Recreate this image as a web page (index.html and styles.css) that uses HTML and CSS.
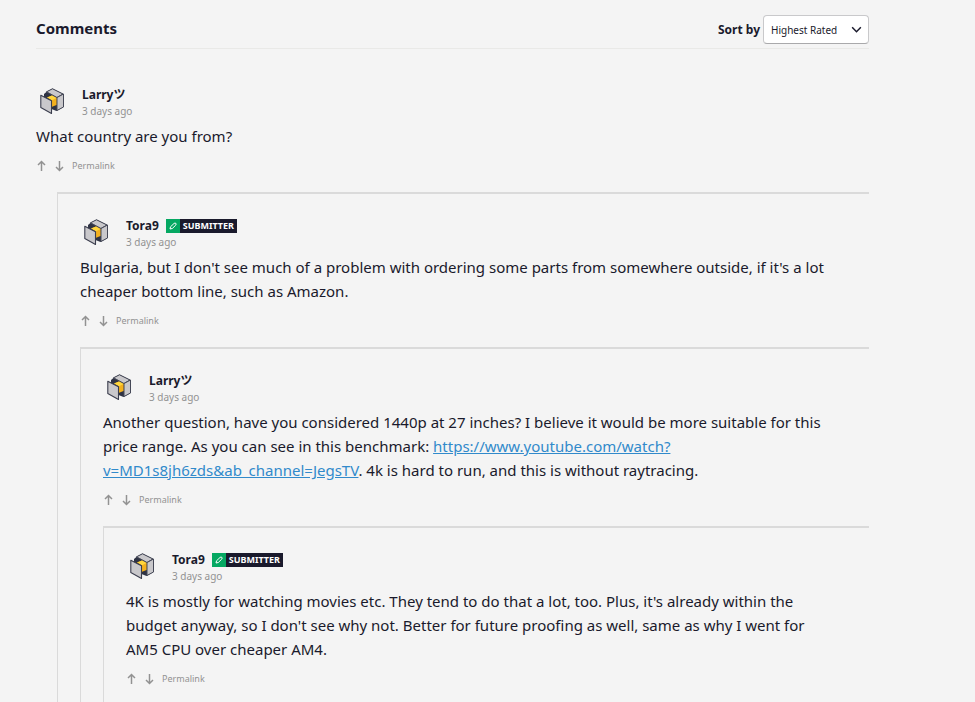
FILE: index.html
```html
<!DOCTYPE html>
<html lang="en">
<head>
<meta charset="utf-8">
<meta name="viewport" content="width=device-width, initial-scale=1">
<title>Comments</title>
<link rel="stylesheet" href="styles.css">
</head>
<body>
<svg class="sprite" aria-hidden="true">
  <symbol id="cube" viewBox="0 0 32 32">
    <path d="M16.500 3.500 27.500 9V22L20.500 26 15.500 24 8 18V9L11 6.500Z" fill="#2f3344"/>
    <path d="M10.500 6.800 16.500 3.800 27 9 21 12.500Z" fill="#c9c8cb" stroke="#454857" stroke-width="1" stroke-linejoin="round"/>
    <path d="M21 12.500 27.500 9V22L21 25.500Z" fill="#c9c8cb" stroke="#454857" stroke-width="1" stroke-linejoin="round"/>
    <path d="M11 12.500 16 10.500 20.500 13V20L15.500 22V15Z" fill="#f3b01e"/>
    <path d="M11 12.500 16 10.500 20.500 13 16 15.200Z" fill="#ffd63d"/>
    <path d="M4.800 10.200 15.500 15.800V28.500L4.800 22.500Z" fill="#c9c8cb" stroke="#3b3e4e" stroke-width="1.100" stroke-linejoin="round"/>
  </symbol>
  <symbol id="up" viewBox="0 0 12 12">
    <path d="M5.500 11V1.500M2 5 5.500 1.500 9 5" fill="none" stroke="currentColor" stroke-width="1.500"/>
  </symbol>
  <symbol id="down" viewBox="0 0 12 12">
    <path d="M5.500 1V10.500M2 7 5.500 10.500 9 7" fill="none" stroke="currentColor" stroke-width="1.500"/>
  </symbol>
  <symbol id="pencil" viewBox="0 0 14 14">
    <path d="M4 10 4.500 7.800 8 4.500Q9 3.700 9.800 4.300T9.700 6.200L6.300 9.500Z" fill="none" stroke="currentColor" stroke-width="1"/>
  </symbol>
</svg>
<main class="comments">
  <header class="comments-header">
    <h2 class="title">Comments</h2>
    <div class="sort">
      <label for="sort">Sort by</label>
      <div class="select">
        <select id="sort"><option>Highest Rated</option></select>
        <svg class="chevron" viewBox="0 0 12 12" aria-hidden="true"><path d="M2 4 6 8 10 4" fill="none" stroke="currentColor" stroke-width="1.400"/></svg>
      </div>
    </div>
  </header>
  <article class="comment">
    <header class="author">
      <svg class="avatar" aria-hidden="true"><use href="#cube"/></svg>
      <div>
        <div class="name">Larryツ</div>
        <div class="date">3 days ago</div>
      </div>
    </header>
    <p class="text">What country are you from?</p>
    <div class="actions">
      <button class="vote" aria-label="Upvote"><svg><use href="#up"/></svg></button>
      <button class="vote" aria-label="Downvote"><svg><use href="#down"/></svg></button>
      <a class="permalink" href="#">Permalink</a>
    </div>
    <div class="replies replies-first">
      <article class="comment">
        <header class="author">
          <svg class="avatar" aria-hidden="true"><use href="#cube"/></svg>
          <div>
            <div class="name">Tora9 <span class="badge"><svg class="badge-icon"><use href="#pencil"/></svg><span class="badge-label">SUBMITTER</span></span></div>
            <div class="date">3 days ago</div>
          </div>
        </header>
        <p class="text">Bulgaria, but I don't see much of a problem with ordering some parts from somewhere outside, if it's a lot cheaper bottom line, such as Amazon.</p>
        <div class="actions">
          <button class="vote" aria-label="Upvote"><svg><use href="#up"/></svg></button>
          <button class="vote" aria-label="Downvote"><svg><use href="#down"/></svg></button>
          <a class="permalink" href="#">Permalink</a>
        </div>
        <div class="replies">
          <article class="comment">
            <header class="author">
              <svg class="avatar" aria-hidden="true"><use href="#cube"/></svg>
              <div>
                <div class="name">Larryツ</div>
                <div class="date">3 days ago</div>
              </div>
            </header>
            <p class="text">Another question, have you considered 1440p at 27 inches? I believe it would be more suitable for this price range. As you can see in this benchmark: <a href="https://www.youtube.com/watch?v=MD1s8jh6zds&amp;ab_channel=JegsTV">https://www.youtube.com/watch?v=MD1s8jh6zds&amp;ab_channel=JegsTV</a>. 4k is hard to run, and this is without raytracing.</p>
            <div class="actions">
              <button class="vote" aria-label="Upvote"><svg><use href="#up"/></svg></button>
              <button class="vote" aria-label="Downvote"><svg><use href="#down"/></svg></button>
              <a class="permalink" href="#">Permalink</a>
            </div>
            <div class="replies">
              <article class="comment comment-last">
                <header class="author">
                  <svg class="avatar" aria-hidden="true"><use href="#cube"/></svg>
                  <div>
                    <div class="name">Tora9 <span class="badge"><svg class="badge-icon"><use href="#pencil"/></svg><span class="badge-label">SUBMITTER</span></span></div>
                    <div class="date">3 days ago</div>
                  </div>
                </header>
                <p class="text">4K is mostly for watching movies etc. They tend to do that a lot, too. Plus, it's already within the budget anyway, so I don't see why not. Better for future proofing as well, same as why I went for AM5 CPU over cheaper AM4.</p>
                <div class="actions">
                  <button class="vote" aria-label="Upvote"><svg><use href="#up"/></svg></button>
                  <button class="vote" aria-label="Downvote"><svg><use href="#down"/></svg></button>
                  <a class="permalink" href="#">Permalink</a>
                </div>
              </article>
            </div>
          </article>
        </div>
      </article>
    </div>
  </article>
</main>
</body>
</html>
```
FILE: styles.css
```css
* { box-sizing: border-box; }
html { overflow: hidden auto; scrollbar-width: none; }
body {
  margin: 0;
  background: #f4f4f4;
  color: #1a1a2c;
  font-family: "Noto Sans", "Noto Sans CJK JP", sans-serif;
  font-size: 15px;
}
.sprite { display: none; }
.comments { padding: 15px 106px 0 36px; }
.comments-header {
  display: flex;
  align-items: flex-start;
  justify-content: space-between;
  height: 34px;
  margin-bottom: 36px;
  border-bottom: 1px solid #e9e9e7;
}
.title { margin: 0; font-size: 15px; line-height: 26px; }
.sort { display: flex; align-items: center; gap: 3px; font-size: 12px; font-weight: 700; }
.select { position: relative; }
.select select {
  display: block;
  appearance: none;
  width: 106px;
  height: 29px;
  padding: 0 24px 0 7px;
  border: 1px solid #c9c9cb;
  border-bottom-color: #a9a9ab;
  border-radius: 4px;
  background: #fff;
  color: #1a1a2c;
  font-family: inherit;
  font-size: 10px;
}
.chevron { position: absolute; top: 8px; right: 6px; width: 13px; height: 13px; pointer-events: none; }
.author { display: flex; gap: 14px; margin-bottom: 7px; }
.avatar { width: 32px; height: 32px; }
.name { display: flex; align-items: center; gap: 7px; height: 20px; font-size: 12px; font-weight: 700; line-height: 20px; }
.date { color: #929292; font-size: 10px; line-height: 12px; }
.badge { display: flex; height: 14px; background: #1a1a2c; color: #fff; font-size: 9px; line-height: 14px; }
.badge-icon { width: 14px; height: 14px; background: #05a862; }
.badge-label { padding: 0 3px; }
.text { margin: 0 0 10px; padding-right: 34px; line-height: 24px; }
.text a { color: #318acb; }
.actions { display: flex; align-items: center; gap: 6px; height: 16px; margin-bottom: 18px; color: #929292; }
.vote { display: flex; padding: 0; border: 0; background: none; color: inherit; }
.vote svg { width: 12px; height: 12px; }
.permalink { color: inherit; font-size: 9px; line-height: 16px; text-decoration: none; }
.replies { padding: 22px 0 0 22px; border-top: 2px solid #dadada; border-left: 1px solid #dadada; }
.replies-first { margin-left: 21px; }
.comment-last { padding-bottom: 24px; }
```
